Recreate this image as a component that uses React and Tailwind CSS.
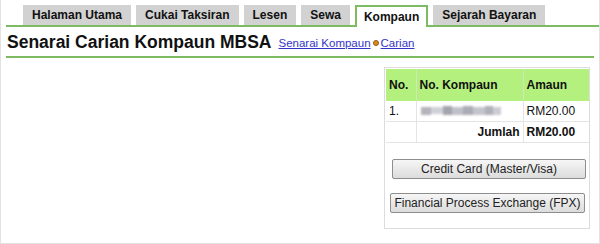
import React from 'react';

const tabs = ['Halaman Utama', 'Cukai Taksiran', 'Lesen', 'Sewa', 'Kompaun', 'Sejarah Bayaran'];

export default function App() {
  return (
    <div className="w-[600px] h-[244px] bg-white border-l border-r border-b border-[#e2e2e2] overflow-hidden text-[#111] font-['Liberation_Sans',Arial,sans-serif]">
      {/* Tab bar */}
      <div className="ml-[5px] pl-[17px] pt-[5px] flex gap-[5px] border-b-2 border-[#7dbb62]">
        {tabs.map((t) =>
          t === 'Kompaun' ? (
            <div
              key={t}
              className="h-[22px] -mb-[2px] px-[7px] flex items-center bg-white border-2 border-b-0 border-[#7dbb62] text-[12px] font-bold"
            >
              {t}
            </div>
          ) : (
            <div key={t} className="h-[20px] px-[9px] flex items-center bg-[#d2d2d2] text-[12px] font-bold">
              {t}
            </div>
          )
        )}
      </div>

      {/* Title */}
      <div className="mx-[5px] pl-px h-[31px] flex items-end pb-[3px] gap-[7px] border-b-2 border-[#7dbb62]">
        <h1 className="text-[17.5px] leading-[22px] font-bold">Senarai Carian Kompaun MBSA</h1>
        <div className="flex items-center text-[11.5px] leading-[18px] text-[#3434c8] mb-px">
          <a className="underline">Senarai Kompaun</a>
          <span className="inline-block w-[6px] h-[6px] rounded-full bg-[#e08a1e] border border-[#8a5a10] mx-[2px]"></span>
          <a className="underline">Carian</a>
        </div>
      </div>

      {/* Payment box */}
      <div className="flex justify-end pr-[9px] mt-[9px]">
        <div className="w-[206px] h-[162px] border border-[#dcdcdc] p-px">
          <table className="w-[203px] border-collapse text-[12px]">
            <thead>
              <tr className="bg-[#b4f07e] h-[32px]">
                <th className="w-[30px] pl-[3px] text-left font-bold border-r border-[#cfe8b8]">No.</th>
                <th className="w-[107px] pl-[3px] text-left font-bold border-r border-[#cfe8b8]">No. Kompaun</th>
                <th className="pl-[3px] text-left font-bold">Amaun</th>
              </tr>
            </thead>
            <tbody>
              <tr className="h-[20px] border-b border-[#e4e4e4]">
                <td className="pl-[3px] border-r border-[#e4e4e4]">1.</td>
                <td className="pl-[3px] border-r border-[#e4e4e4]">
                  <div className="flex items-center blur-[0.8px] ml-[1px] w-[80px] h-[10px]">
                    <span className="w-[10px] h-[8px] bg-[#b4b4bc]"></span>
                    <span className="w-[12px] h-[7px] bg-[#d0d0d8]"></span>
                    <span className="w-[9px] h-[9px] bg-[#a4a4ae]"></span>
                    <span className="w-[11px] h-[8px] bg-[#c0c0c8]"></span>
                    <span className="w-[10px] h-[9px] bg-[#acacb6]"></span>
                    <span className="w-[12px] h-[8px] bg-[#c4c4cc]"></span>
                    <span className="w-[8px] h-[9px] bg-[#b0b0b8]"></span>
                    <span className="w-[8px] h-[8px] bg-[#ccccd4]"></span>
                  </div>
                </td>
                <td className="pl-[3px]">RM20.00</td>
              </tr>
              <tr className="h-[21px] border-b border-[#e4e4e4]">
                <td className="border-r border-[#e4e4e4]"></td>
                <td className="pr-[3px] text-right font-bold border-r border-[#e4e4e4]">Jumlah</td>
                <td className="pl-[3px] font-bold">RM20.00</td>
              </tr>
              <tr>
                <td colSpan={3} className="pt-[16px]">
                  <div className="flex flex-col items-center gap-[14px]">
                    <button className="w-[194px] h-[20px] ml-[3px] text-[12px] text-[#222] border border-[#8e8e8e] rounded-[2px] bg-gradient-to-b from-[#f6f6f6] to-[#dcdcdc]">
                      Credit Card (Master/Visa)
                    </button>
                    <button className="w-[195px] h-[20px] text-[12px] text-[#222] border border-[#8e8e8e] rounded-[2px] bg-gradient-to-b from-[#f6f6f6] to-[#dcdcdc]">
                      Financial Process Exchange (FPX)
                    </button>
                  </div>
                </td>
              </tr>
            </tbody>
          </table>
        </div>
      </div>
    </div>
  );
}
